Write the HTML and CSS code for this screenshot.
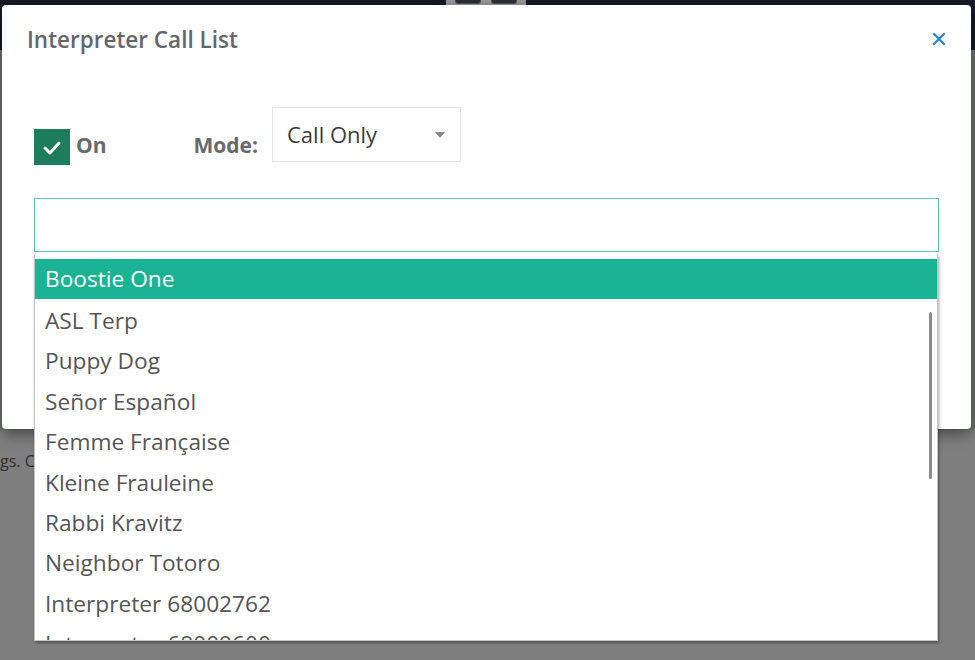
FILE: index.html
```html
<!DOCTYPE html>
<html lang="en">
<head>
  <meta charset="UTF-8" />
  <title>Interpreter Call List</title>
  <link rel="stylesheet" href="styles.css">
</head>
<body>

  <div class="app">
    <header class="topbar">
      <div class="topbar-tools">
        <span class="tool-btn"></span>
        <span class="tool-btn"></span>
      </div>
    </header>
    <div class="page-heading"></div>
    <main class="page-content">
      <p>gs. C</p>
    </main>
  </div>

  <!-- Modal -->
  <div class="modal">
    <div class="modal-header">
      <h4 class="modal-title">Interpreter Call List</h4>
      <span class="close">
        <svg width="14" height="14" viewBox="0 0 14 14">
          <path d="M2 2 L12 12 M12 2 L2 12" stroke="#2b87d6" stroke-width="2.4" stroke-linecap="round" fill="none"/>
        </svg>
      </span>
    </div>

    <div class="modal-body">
      <div class="controls">
        <label class="toggle">
          <span class="check-box">
            <svg width="36" height="36" viewBox="0 0 36 36">
              <path d="M11 19 L16 24 L25 14" stroke="#fff" stroke-width="3" stroke-linecap="round" stroke-linejoin="round" fill="none"/>
            </svg>
          </span>
          <span class="toggle-label">On</span>
        </label>

        <span class="mode-label">Mode:</span>
        <div class="mode-select">
          <span>Call Only</span>
          <span class="caret"></span>
        </div>
      </div>

      <div class="search-wrap">
        <div class="search-input"></div>

        <ul class="dropdown">
          <li class="active">Boostie One</li>
          <li>ASL Terp</li>
          <li>Puppy Dog</li>
          <li>Señor Español</li>
          <li>Femme Française</li>
          <li>Kleine Frauleine</li>
          <li>Rabbi Kravitz</li>
          <li>Neighbor Totoro</li>
          <li>Interpreter 68002762</li>
          <li>Interpreter 68009600</li>
        </ul>
        <span class="scroll-thumb"></span>
      </div>
    </div>
  </div>

</body>
</html>
```

FILE: styles.css
```css
body {
  font-family: 'Open Sans', sans-serif;
  margin: 0;
  background: #7f7f7f;
  color: #676a6c;
  overflow: hidden;
}

.app {
  width: 975px;
  height: 660px;
}

.topbar {
  height: 50px;
  background: #151b26;
  display: flex;
  justify-content: center;
}

.topbar-tools {
  display: flex;
  gap: 10px;
  height: 4px;
  padding: 0 9px 1px;
  margin-left: -3px;
  background: #9a9a9a;
}

.tool-btn {
  width: 26px;
  height: 4px;
  background: #2a2f36;
  border-radius: 0 0 3px 3px;
  border: 1px solid #555;
  border-top: none;
  box-sizing: border-box;
}

.page-heading {
  height: 380px;
  background: #6f766d;
}

.page-content {
  background: #7f7f7f;
  padding-top: 20px;
}

.page-content p {
  margin: 0;
  font-size: 16px;
  line-height: 22px;
  color: #2e2e2e;
  white-space: nowrap;
}

/* Modal */
.modal {
  position: absolute;
  left: 2px;
  top: 5px;
  width: 969px;
  height: 424px;
  background: #fff;
  border-radius: 4px;
  box-shadow: 0 5px 15px rgba(0,0,0,0.45);
}

.modal-header {
  display: flex;
  justify-content: space-between;
  align-items: center;
  padding: 22px 25px 0 25px;
}

.modal-title {
  margin: 0;
  font-size: 22.5px;
  line-height: 26px;
  font-weight: 600;
  color: #646769;
}

.close {
  display: flex;
  margin-top: -3px;
  cursor: pointer;
}

.modal-body {
  padding: 54px 32px 0 32px;
}

.controls {
  display: flex;
  align-items: flex-start;
}

.toggle {
  display: flex;
  align-items: center;
  margin-top: 22px;
  gap: 6px;
}

.check-box {
  width: 36px;
  height: 36px;
  background: #1d7c5b;
  display: flex;
}

.toggle-label,
.mode-label {
  font-size: 21px;
  font-weight: 700;
  line-height: 28px;
  color: #676a6c;
}

.toggle-label {
  padding-bottom: 4px;
}

.mode-label {
  margin: 24px 14px 0 87px;
}

.mode-select {
  width: 189px;
  height: 55px;
  box-sizing: border-box;
  border: 1px solid #e5e6e7;
  display: flex;
  align-items: center;
  justify-content: space-between;
  padding: 0 15px 2px 14px;
  font-size: 22px;
  color: #3d3d3d;
}

.caret {
  width: 0;
  height: 0;
  border-left: 5px solid transparent;
  border-right: 5px solid transparent;
  border-top: 6px solid #888;
  margin-top: 2px;
}

.search-wrap {
  position: relative;
  margin-top: 33px;
}

.search-input {
  height: 54px;
  box-sizing: border-box;
  border: 1.5px solid #5cc9b3;
  background: #fff;
}

.dropdown {
  position: absolute;
  left: 0;
  top: 56px;
  width: 904px;
  height: 387px;
  box-sizing: border-box;
  margin: 0;
  padding: 5px 0 0;
  list-style: none;
  background: #fff;
  border: 1px solid #c4c4c4;
  border-top: none;
  box-shadow: 1px 2px 3px rgba(0,0,0,0.35);
  overflow: hidden;
}

.dropdown li {
  height: 40.4px;
  line-height: 40px;
  padding-left: 10px;
  font-size: 22.7px;
  color: #555;
  white-space: nowrap;
}

.dropdown li.active {
  height: 40px;
  margin-bottom: 2px;
  background: #1ab394;
  color: #fff;
}

.scroll-thumb {
  position: absolute;
  left: 895px;
  top: 114px;
  width: 3px;
  height: 167px;
  border-radius: 2px;
  background: #8a8a8a;
}
```
